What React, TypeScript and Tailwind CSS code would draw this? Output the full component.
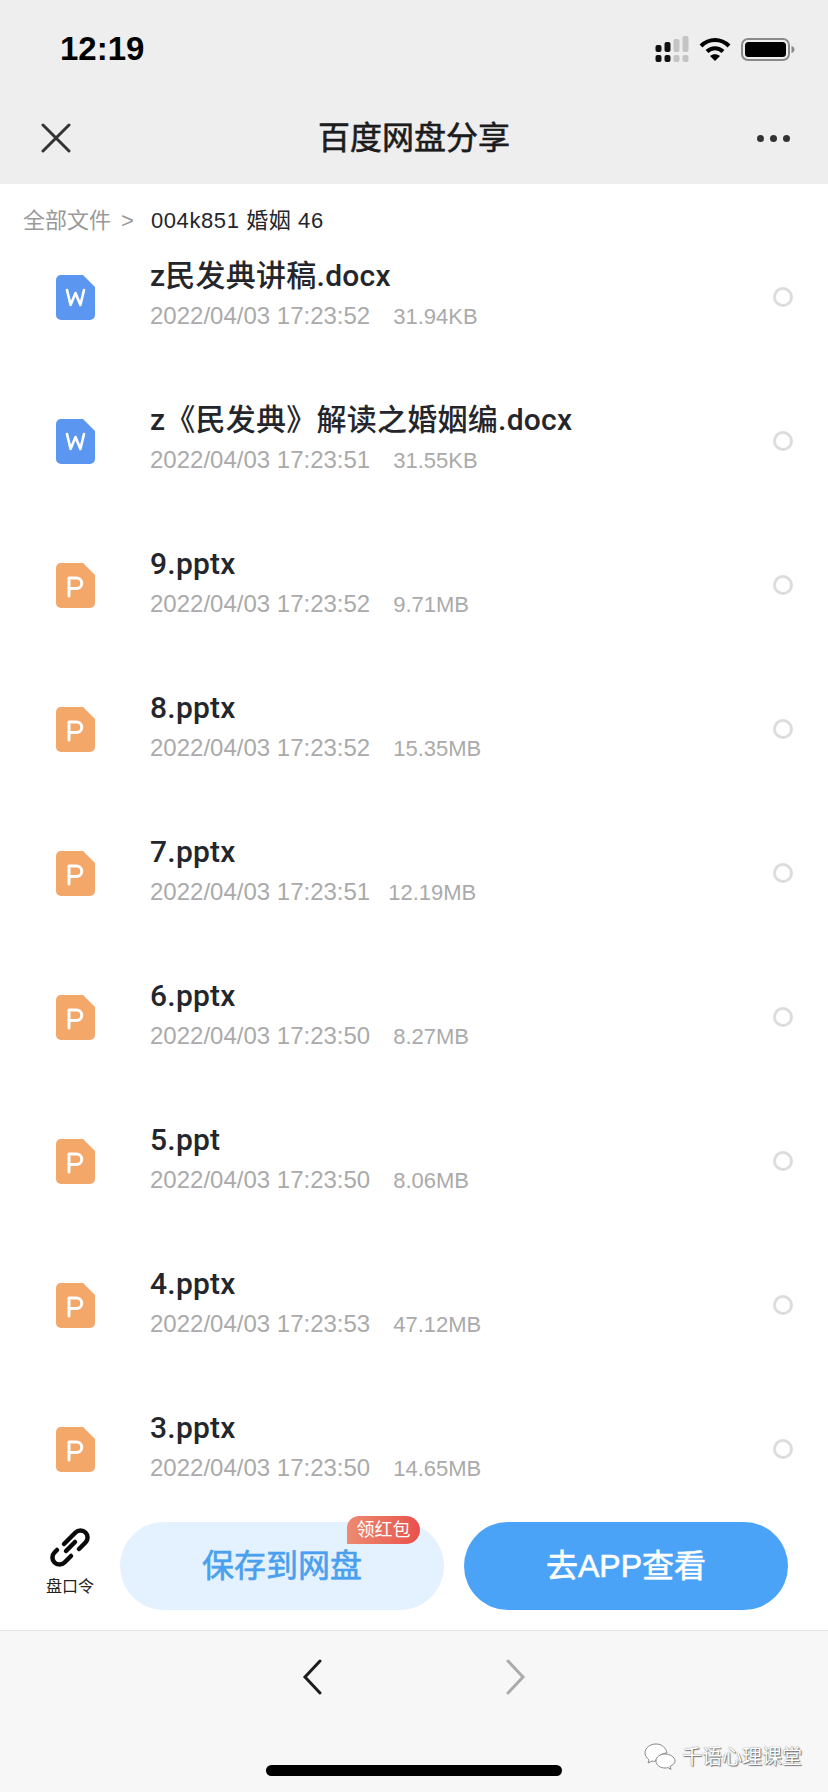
import React from 'react'

const sans = 'font-["Liberation_Sans","Noto_Sans_CJK_SC",sans-serif]'

type FileRow = { name: string; time: string; size: string; type: 'w' | 'p'; gap: string }

const files: FileRow[] = [
  { name: 'z民发典讲稿.docx', time: '2022/04/03 17:23:52', size: '31.94KB', type: 'w', gap: 'ml-[23px]' },
  { name: 'z《民发典》解读之婚姻编.docx', time: '2022/04/03 17:23:51', size: '31.55KB', type: 'w', gap: 'ml-[23px]' },
  { name: '9.pptx', time: '2022/04/03 17:23:52', size: '9.71MB', type: 'p', gap: 'ml-[23px]' },
  { name: '8.pptx', time: '2022/04/03 17:23:52', size: '15.35MB', type: 'p', gap: 'ml-[23px]' },
  { name: '7.pptx', time: '2022/04/03 17:23:51', size: '12.19MB', type: 'p', gap: 'ml-[18px]' },
  { name: '6.pptx', time: '2022/04/03 17:23:50', size: '8.27MB', type: 'p', gap: 'ml-[23px]' },
  { name: '5.ppt', time: '2022/04/03 17:23:50', size: '8.06MB', type: 'p', gap: 'ml-[23px]' },
  { name: '4.pptx', time: '2022/04/03 17:23:53', size: '47.12MB', type: 'p', gap: 'ml-[23px]' },
  { name: '3.pptx', time: '2022/04/03 17:23:50', size: '14.65MB', type: 'p', gap: 'ml-[23px]' },
]

const FileIcon = ({ type }: { type: 'w' | 'p' }) => (
  <svg width="39" height="45" viewBox="0 0 39 45" className="shrink-0">
    <path
      d="M5 0H27L39 12V40a5 5 0 0 1-5 5H5a5 5 0 0 1-5-5V5a5 5 0 0 1 5-5Z"
      fill={type === 'w' ? '#5b97f1' : '#f3a768'}
    />
    {type === 'w' ? (
      <path d="M11 15l3.600 15 4.900-12 4.900 12L28 15" fill="none" stroke="#fff" strokeWidth="2.600" strokeLinejoin="round" strokeLinecap="round" />
    ) : (
      <path d="M13 33V15h7.500a5 5 0 0 1 0 10.500H13" fill="none" stroke="#fff" strokeWidth="3" strokeLinejoin="round" strokeLinecap="round" />
    )}
  </svg>
)

const Row = ({ file }: { file: FileRow }) => (
  <div className="h-[144px] flex items-center pl-14 pr-[35px] shrink-0">
    <FileIcon type={file.type} />
    <div className="ml-[55px] flex-1 -mt-[4px]">
      <div className='font-["Roboto","Noto_Sans_CJK_SC",sans-serif] text-[30px] leading-[36px] font-medium tracking-[0.25px] text-[#24262b]'>{file.name}</div>
      <div className="text-2xl leading-[32px] text-[#aaaaaa] mt-[6px] flex items-baseline">
        <span>{file.time}</span>
        <span className={`${file.gap} text-[22px]`}>{file.size}</span>
      </div>
    </div>
    <div className="w-5 h-5 rounded-full border-[3px] border-[#dddddd] bg-white" />
  </div>
)

const StatusIcons = () => (
  <div className="flex items-center gap-[10px]">
    <svg width="34" height="26" viewBox="0 0 33 26">
      <rect x="0" y="9" width="6" height="7" rx="2" fill="#111" />
      <rect x="9" y="6" width="6" height="10" rx="2" fill="#111" />
      <rect x="18" y="3" width="6" height="13" rx="2" fill="#c4c4c4" />
      <rect x="27" y="0" width="6" height="16" rx="2" fill="#c4c4c4" />
      <rect x="0" y="19" width="6" height="7" rx="2" fill="#111" />
      <rect x="9" y="19" width="6" height="7" rx="2" fill="#111" />
      <rect x="18" y="19" width="6" height="7" rx="2" fill="#c4c4c4" />
      <rect x="27" y="19" width="6" height="7" rx="2" fill="#c4c4c4" />
    </svg>
    <svg width="32" height="24" viewBox="0 0 32 24" fill="none" stroke="#000" strokeWidth="4">
      <path d="M2 9C10 1 22 1 30 9" />
      <path d="M8 14.500c4.500-4.500 11.500-4.500 16 0" />
      <path d="M16 24l-5-5c3-2.500 7-2.500 10 0Z" fill="#000" stroke="none" />
    </svg>
    <svg width="54" height="23" viewBox="0 0 54 23">
      <rect x="1" y="1" width="47" height="21" rx="6" fill="none" stroke="#8a8a8a" strokeWidth="2" />
      <rect x="4" y="4" width="41" height="15" rx="3.500" fill="#000" />
      <path d="M50.500 8c2 .5 3 2 3 3.500s-1 3-3 3.500Z" fill="#8a8a8a" />
    </svg>
  </div>
)

export default function App() {
  return (
    <div className={`${sans} relative w-[828px] h-[1792px] overflow-hidden bg-white flex flex-col`}>
      <div className="bg-[#eeeeee] h-[184px] shrink-0 flex flex-col">
        <div className="h-[98px] flex items-center justify-between pl-[60px] pr-[33px]">
          <span className="text-[33px] font-bold text-black">12:19</span>
          <StatusIcons />
        </div>
        <div className="relative flex-1 flex items-center justify-between pl-[41px] pr-[38px] pb-[6px]">
          <svg width="30" height="30" viewBox="0 0 30 30" stroke="#333" strokeWidth="3" strokeLinecap="round">
            <path d="M2 2l26 26M28 2L2 28" />
          </svg>
          <span className="text-[32px] text-[#1c1c1c] [-webkit-text-stroke:0.6px_#1c1c1c]">百度网盘分享</span>
          <div className="flex gap-[6px]">
            <span className="w-[7px] h-[7px] rounded-full bg-[#333]" />
            <span className="w-[7px] h-[7px] rounded-full bg-[#333]" />
            <span className="w-[7px] h-[7px] rounded-full bg-[#333]" />
          </div>
        </div>
      </div>

      <div className="h-[56px] shrink-0 flex items-center pl-[23px] pt-[16px] text-[22px]">
        <span className="text-[#999999]">全部文件</span>
        <span className="text-[#999999] ml-[10px]">&gt;</span>
        <span className="text-[#24262b] ml-[17px] tracking-[0.6px]">004k851 婚姻 46</span>
      </div>

      <div className="flex-1 min-h-0 overflow-hidden -mt-[15px]">
        {files.map((f) => (
          <Row key={f.name} file={f} />
        ))}
      </div>

      <div className="relative bg-white h-[131px] shrink-0 flex items-start pt-[22px] border-b border-[#e4e4e4]">
        <div className="w-[120px] pl-[20px] pt-[5px] flex flex-col items-center">
          <svg width="40" height="40" viewBox="0 0 40 40" fill="none" stroke="#0a0a0a" strokeWidth="4.500" strokeLinecap="round">
            <path d="M29 22L35.500 15.500A7 7 0 0 0 25.500 5.500L14 17" />
            <path d="M7 23L4.500 25.500A7 7 0 0 0 14.500 35.500L21 29" />
            <path d="M16 24L25 15" />
          </svg>
          <span className="text-base leading-5 mt-[10px] text-[#222]">盘口令</span>
        </div>
        <div className="relative w-[324px] h-[88px] rounded-full bg-[#e3f2fe] flex items-center justify-center text-[32px] text-[#4a9fee]">
          <span className="[-webkit-text-stroke:0.6px_#4a9fee]">保存到网盘</span>
          <span className="absolute -top-[6px] right-[24px] w-[73px] h-[28px] rounded-tl-[12px] rounded-tr-[14px] rounded-br-[14px] bg-linear-to-r from-[#ec8a70] to-[#e8504c] flex items-center justify-center text-lg font-normal text-white">
            领红包
          </span>
        </div>
        <div className="ml-5 w-[324px] h-[88px] rounded-full bg-[#4ba3f7] flex items-center justify-center text-[32px] text-white [-webkit-text-stroke:0.6px_#ffffff]">
          去APP查看
        </div>
      </div>

      <div className="relative bg-[#f7f7f7] h-[161px] shrink-0 flex justify-center gap-[184px] pt-[28px]">
        <svg width="20" height="36" viewBox="0 0 20 36" fill="none" stroke="#1c1c1c" strokeWidth="3" strokeLinecap="round">
          <path d="M18 2L3 18l15 16" />
        </svg>
        <svg width="20" height="36" viewBox="0 0 20 36" fill="none" stroke="#ababab" strokeWidth="3" strokeLinecap="round">
          <path d="M2 2l15 16L2 34" />
        </svg>
        <div className="absolute bottom-[16px] left-[266px] w-[296px] h-[11px] rounded-full bg-black" />
        <div className="absolute right-[26px] bottom-[21px] flex items-center gap-[6px]">
          <svg width="32" height="28" viewBox="0 0 32 28" fill="#fff" stroke="#8a8a8a" strokeWidth="1">
            <path d="M12 1C6 1 1 5 1 10c0 3 2 5 4 7l-1 3 4-2c1 .3 2 .4 3 .4C14 13 18 10 23 10 22 5 18 1 12 1Z" />
            <path d="M21 11c-5 0-9 3-9 7s4 7 9 7c1 0 2 0 3-.4l3 1.800-1-3c3-1.400 5-3 5-5.400 0-4-5-7-10-7Z" />
          </svg>
          <span className="text-xl text-white [text-shadow:0_0_1px_#555,1px_1px_1px_#777]">千语心理课堂</span>
        </div>
      </div>
    </div>
  )
}
